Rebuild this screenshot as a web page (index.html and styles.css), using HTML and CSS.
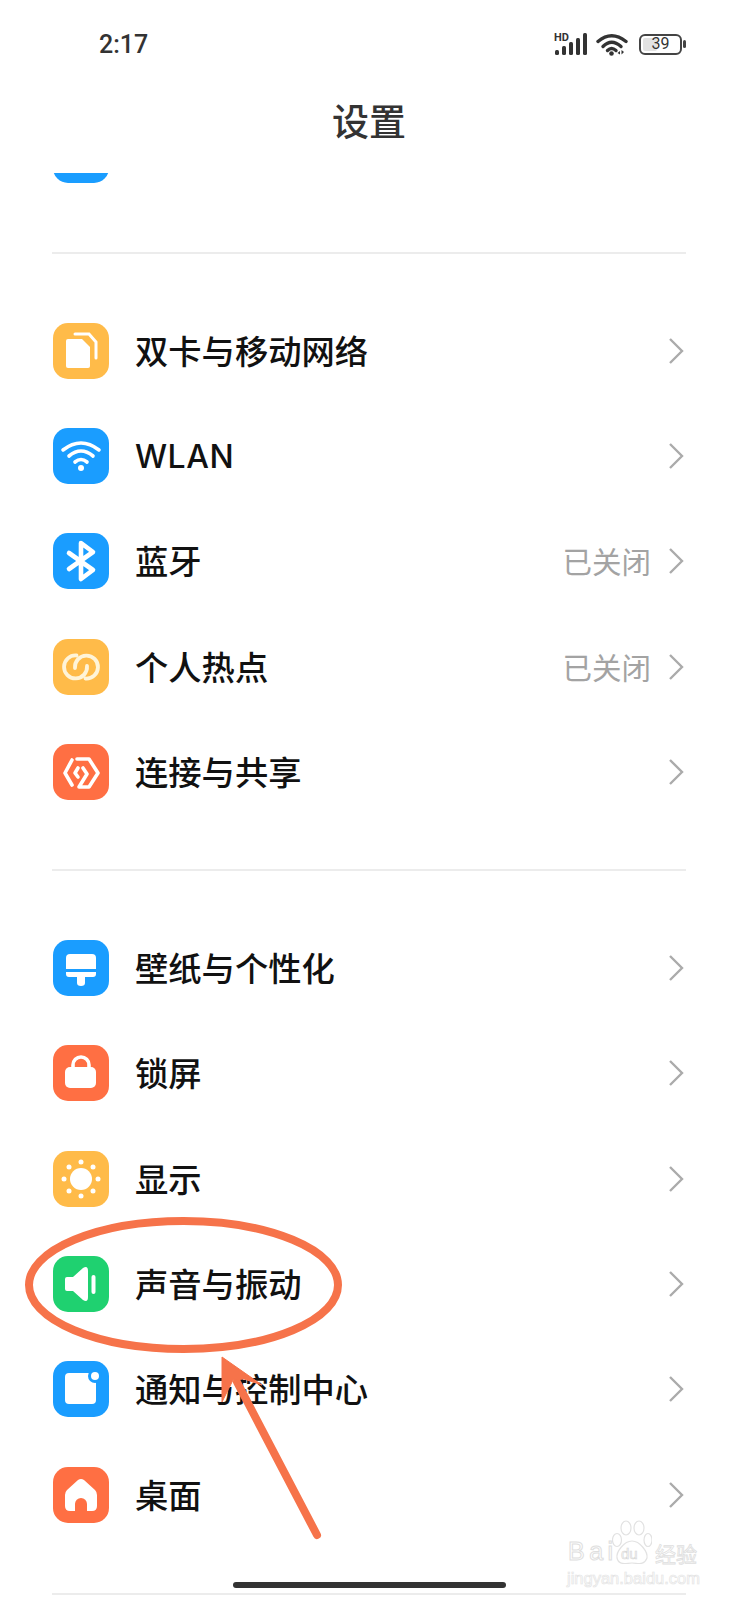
FILE: index.html
```html
<!DOCTYPE html>
<html lang="zh">
<head>
<meta charset="utf-8">
<title>设置</title>
<link rel="stylesheet" href="styles.css">
</head>
<body>
<div class="phone">
  <header class="header">
    <div class="status">
      <span class="time">2:17</span>
      <div class="status-icons">
        <svg class="sig" viewBox="0 0 34 24" width="34" height="24">
          <text x="0" y="8.500" class="hd">HD</text>
          <rect x="1" y="18" width="4" height="5" rx="1.500"/><rect x="8" y="14" width="4" height="9" rx="1.500"/><rect x="15" y="10" width="4" height="13" rx="1.500"/><rect x="22" y="6" width="4" height="17" rx="1.500"/><rect x="29" y="1" width="4" height="22" rx="1.500"/>
        </svg>
        <svg class="wf" viewBox="0 0 32 24" width="32" height="24">
          <g fill="none" stroke="#333" stroke-width="3.400" stroke-linecap="round">
            <path d="M2 9.500Q15.500-2 30 9.500"/><path d="M7 14.500Q15.500 6 25 14.500"/><path d="M11.500 18.500Q15.500 14.500 20 18.500"/>
          </g>
          <circle cx="15.500" cy="21.500" r="2.300" fill="#333"/>
          <path d="M24 19v3.500l-2.500-1.500zM25.500 18v4.500l2.500-2.500z" fill="#333"/>
        </svg>
        <div class="battery"><span class="battery-fill"></span><span class="battery-num">39</span></div>
        <span class="battery-tip"></span>
      </div>
    </div>
    <h1 class="title">设置</h1>
  </header>

  <div class="peek"><span class="icon blue"></span></div>
  <div class="divider first"></div>

  <section class="group g1">
    <div class="row">
      <span class="icon amber"><svg viewBox="0 0 56 56"><path d="M15 16H29L37 24V43Q37 45 35 45H15Q13 45 13 43V18Q13 16 15 16Z" fill="#fff"/><path d="M22 11H36L43 19V35" fill="none" stroke="#fff" stroke-width="3" stroke-linecap="round"/></svg></span>
      <span class="label">双卡与移动网络</span><svg class="chev" viewBox="0 0 16 28"><path d="M2 2 14 14 2 26"/></svg>
    </div>
    <div class="row">
      <span class="icon blue"><svg viewBox="0 0 56 56"><g fill="none" stroke="#fff" stroke-width="3.600" stroke-linecap="round"><path d="M10 22Q28 8 46 22"/><path d="M16 28Q28 18 40 28"/><path d="M22 34Q28 29 34 34"/></g><circle cx="28" cy="40" r="3" fill="#fff"/></svg></span>
      <span class="label latin">WLAN</span><svg class="chev" viewBox="0 0 16 28"><path d="M2 2 14 14 2 26"/></svg>
    </div>
    <div class="row">
      <span class="icon blue"><svg viewBox="0 0 56 56"><path d="M16 20 40 37 28 46V10L40 19 16 36" fill="none" stroke="#fff" stroke-width="4.600" stroke-linecap="round" stroke-linejoin="round"/></svg></span>
      <span class="label">蓝牙</span><span class="value">已关闭</span><svg class="chev" viewBox="0 0 16 28"><path d="M2 2 14 14 2 26"/></svg>
    </div>
    <div class="row">
      <span class="icon amber"><svg viewBox="0 0 56 56"><g fill="none" stroke="#fff4d8" stroke-width="3.800" stroke-linecap="round"><path d="M23.500 16.500A11.500 11.500 0 1 0 34 27"/><path d="M32.500 39.500A11.500 11.500 0 1 0 22 29"/></g></svg></span>
      <span class="label">个人热点</span><span class="value">已关闭</span><svg class="chev" viewBox="0 0 16 28"><path d="M2 2 14 14 2 26"/></svg>
    </div>
    <div class="row">
      <span class="icon coral"><svg viewBox="0 0 56 56"><g fill="none" stroke="#fff" stroke-width="3.600" stroke-linecap="round" stroke-linejoin="round"><path d="M19 16 12 29 19 41"/><path d="M25 24 22 29 25 33"/><path d="M24 15H36L45 29 36 43H26L34 30 30 24"/></g></svg></span>
      <span class="label">连接与共享</span><svg class="chev" viewBox="0 0 16 28"><path d="M2 2 14 14 2 26"/></svg>
    </div>
  </section>
  <div class="divider"></div>

  <section class="group g2">
    <div class="row">
      <span class="icon blue"><svg viewBox="0 0 56 56"><path d="M17 14H39Q43 14 43 18V29H13V18Q13 14 17 14Z" fill="#fff"/><path d="M13 32H43V34Q43 37 40 37H32V43Q32 46 28 46 24 46 24 43V37H16Q13 37 13 34Z" fill="#fff"/></svg></span>
      <span class="label">壁纸与个性化</span><svg class="chev" viewBox="0 0 16 28"><path d="M2 2 14 14 2 26"/></svg>
    </div>
    <div class="row">
      <span class="icon coral"><svg viewBox="0 0 56 56"><path d="M20 24V20A8 8 0 0 1 36 20V24" fill="none" stroke="#fff" stroke-width="3.600"/><rect x="12" y="22" width="31" height="21" rx="5" fill="#fff"/></svg></span>
      <span class="label">锁屏</span><svg class="chev" viewBox="0 0 16 28"><path d="M2 2 14 14 2 26"/></svg>
    </div>
    <div class="row">
      <span class="icon amber"><svg viewBox="0 0 56 56" fill="#fff"><circle cx="28" cy="28" r="11"/><circle cx="28" cy="11" r="2.500"/><circle cx="28" cy="45" r="2.500"/><circle cx="11" cy="28" r="2.500"/><circle cx="45" cy="28" r="2.500"/><circle cx="16" cy="16" r="2.500"/><circle cx="40" cy="16" r="2.500"/><circle cx="16" cy="40" r="2.500"/><circle cx="40" cy="40" r="2.500"/></svg></span>
      <span class="label">显示</span><svg class="chev" viewBox="0 0 16 28"><path d="M2 2 14 14 2 26"/></svg>
    </div>
    <div class="row">
      <span class="icon green"><svg viewBox="0 0 56 56" fill="#fff"><path d="M14 21H20L30 12Q35 9 35 15V41Q35 47 30 44L20 35H14Q12 35 12 33V23Q12 21 14 21Z"/><rect x="38.500" y="19" width="4" height="19" rx="2"/></svg></span>
      <span class="label">声音与振动</span><svg class="chev" viewBox="0 0 16 28"><path d="M2 2 14 14 2 26"/></svg>
    </div>
    <div class="row">
      <span class="icon blue"><svg viewBox="0 0 56 56"><rect x="12" y="12" width="31" height="31" rx="4" fill="#fff"/><circle cx="42" cy="15" r="7" fill="#1a9dff"/><circle cx="42" cy="15" r="4" fill="#fff"/></svg></span>
      <span class="label">通知与控制中心</span><svg class="chev" viewBox="0 0 16 28"><path d="M2 2 14 14 2 26"/></svg>
    </div>
    <div class="row">
      <span class="icon coral"><svg viewBox="0 0 56 56"><path d="M25 13Q28 11 31 13L42 23Q44 25 44 28V39Q44 44 39 44H34V37A6 6 0 0 0 22 37V44H17Q12 44 12 39V28Q12 25 14 23Z" fill="#fff"/></svg></span>
      <span class="label">桌面</span><svg class="chev" viewBox="0 0 16 28"><path d="M2 2 14 14 2 26"/></svg>
    </div>
  </section>
  <div class="divider"></div>

  <svg class="annotation" viewBox="0 0 738 1600" width="738" height="1600">
    <ellipse cx="183.500" cy="1285" rx="154.500" ry="64" fill="none" stroke="#f6734a" stroke-width="8"/>
    <path d="M317 1535 237 1382" fill="none" stroke="#f6734a" stroke-width="8" stroke-linecap="round"/>
    <path d="M222 1357 262 1385 244 1379 233 1380 222 1402Z" fill="#f6734a" stroke="#f6734a" stroke-linejoin="round"/>
  </svg>

  <div class="home-bar"></div>

  <div class="watermark">
    <svg class="paw" viewBox="0 0 40 46" width="40" height="46">
      <g fill="#fff" stroke="#e2e2e2" stroke-width="1.200">
        <ellipse cx="5" cy="20" rx="4.500" ry="6.500"/><ellipse cx="14" cy="8" rx="5" ry="7"/><ellipse cx="27" cy="8" rx="5" ry="7"/><ellipse cx="36" cy="20" rx="4" ry="6.500"/>
        <path d="M20 21C12 21 4 32 5 38 7 46 14 43 20 43 26 43 32 46 35 38 36 32 28 21 20 21Z"/>
      </g>
    </svg>
    <span class="wm-bai">Bai</span>
    <span class="wm-du">du</span>
    <span class="wm-cn">经验</span>
    <span class="wm-url">jingyan.baidu.com</span>
  </div>
</div>
</body>
</html>
```
FILE: styles.css
```css
* { box-sizing: border-box; }
html, body { margin: 0; padding: 0; background: #fff; }
.phone {
  position: relative;
  width: 738px;
  height: 1600px;
  overflow: hidden;
  background: #fff;
  font-family: "Noto Sans CJK SC", "Noto Sans", sans-serif;
}
.header { height: 173px; display: flex; flex-direction: column; }
.status {
  height: 90px;
  padding: 31px 52px 0 99px;
  display: flex;
  justify-content: space-between;
  align-items: flex-start;
}
.time {
  font-family: Roboto, sans-serif;
  font-size: 25px;
  font-weight: 500;
  line-height: 27px;
  color: #333;
}
.status-icons { display: flex; align-items: center; gap: 8px; margin-top: 1px; }
.sig { fill: #333; }
.hd { font-family: Roboto, sans-serif; font-size: 11px; font-weight: 700; fill: #333; }
.battery {
  position: relative;
  width: 43px;
  height: 21px;
  border: 2px solid #444;
  border-radius: 6px;
  display: flex;
  align-items: center;
  justify-content: center;
  padding: 2px;
  margin-left: 3px;
}
.battery-fill { position: absolute; left: 2px; top: 2px; bottom: 2px; width: 14px; background: #e2e2e2; border-radius: 2px; }
.battery-num { position: relative; font-family: Roboto, sans-serif; font-size: 16px; line-height: 16px; color: #333; }
.battery-tip { width: 3px; height: 8px; border-radius: 2px; background: #444; margin-left: -7px; }
.title {
  margin: 0;
  font-size: 37px;
  font-weight: 500;
  line-height: 50px;
  color: #333;
  text-align: center;
  height: 50px;
  margin-top: 5px;
}
.peek {
  height: 10px;
  padding-left: 52.5px;
  overflow: hidden;
  display: flex;
  align-items: flex-end;
}
.icon {
  flex: none;
  width: 56px;
  height: 56px;
  border-radius: 15px;
  display: block;
}
.icon svg { display: block; width: 56px; height: 56px; }
.amber { background: #ffbb49; }
.blue { background: #1a9dff; }
.coral { background: #ff6f43; }
.green { background: #1fd170; }
.divider { height: 2px; margin: 0 52px 0 52px; background: #ececec; }
.divider.first { margin-top: 69px; }
.group { display: flex; flex-direction: column; }
.g1 { padding: 44px 0 45px; }
.g2 { padding: 44px 0 46px; }
.row {
  height: 105.3px;
  padding: 0 53px 0 52.5px;
  display: flex;
  align-items: center;
}
.label {
  margin: -2px 0 0 26.5px;
  flex: 1;
  font-size: 33.3px;
  line-height: 46px;
  font-weight: 500;
  color: #111;
}
.label.latin {
  margin-top: 2px;
  font-family: Inter, sans-serif;
  font-size: 32px;
  letter-spacing: 0.5px;
}
.value {
  font-size: 29.5px;
  line-height: 40px;
  font-weight: 400;
  color: #a3a3a3;
  margin: -2px 17px 0 0;
}
.chev { flex: none; width: 16px; height: 28px; margin: 0 1px 0 0; }
.chev path { fill: none; stroke: #ababab; stroke-width: 2.4; }
.annotation { position: absolute; left: 0; top: 0; pointer-events: none; }
.home-bar {
  position: absolute;
  left: 233px;
  top: 1582px;
  width: 273px;
  height: 6px;
  border-radius: 3px;
  background: #333;
}
.watermark {
  position: absolute;
  left: 566px;
  top: 1519px;
  width: 134px;
  height: 66px;
  font-family: "Liberation Sans", sans-serif;
  color: #fff;
}
.paw { position: absolute; left: 46px; top: 1px; }
.wm-bai {
  position: absolute;
  left: 2px;
  top: 17px;
  font-size: 25px;
  line-height: 30px;
  letter-spacing: 4.5px;
  -webkit-text-stroke: 1px #dedede;
}
.wm-du {
  position: absolute;
  left: 55px;
  top: 26px;
  font-size: 15px;
  line-height: 18px;
  -webkit-text-stroke: .7px #d8d8d8;
}
.wm-cn {
  position: absolute;
  left: 89px;
  top: 19px;
  font-family: "Noto Sans CJK SC", sans-serif;
  font-size: 21px;
  line-height: 30px;
  -webkit-text-stroke: .8px #dedede;
}
.wm-url {
  position: absolute;
  left: 1px;
  top: 50px;
  font-size: 16.5px;
  line-height: 18px;
  -webkit-text-stroke: .7px #e4e4e4;
  white-space: nowrap;
}
```
